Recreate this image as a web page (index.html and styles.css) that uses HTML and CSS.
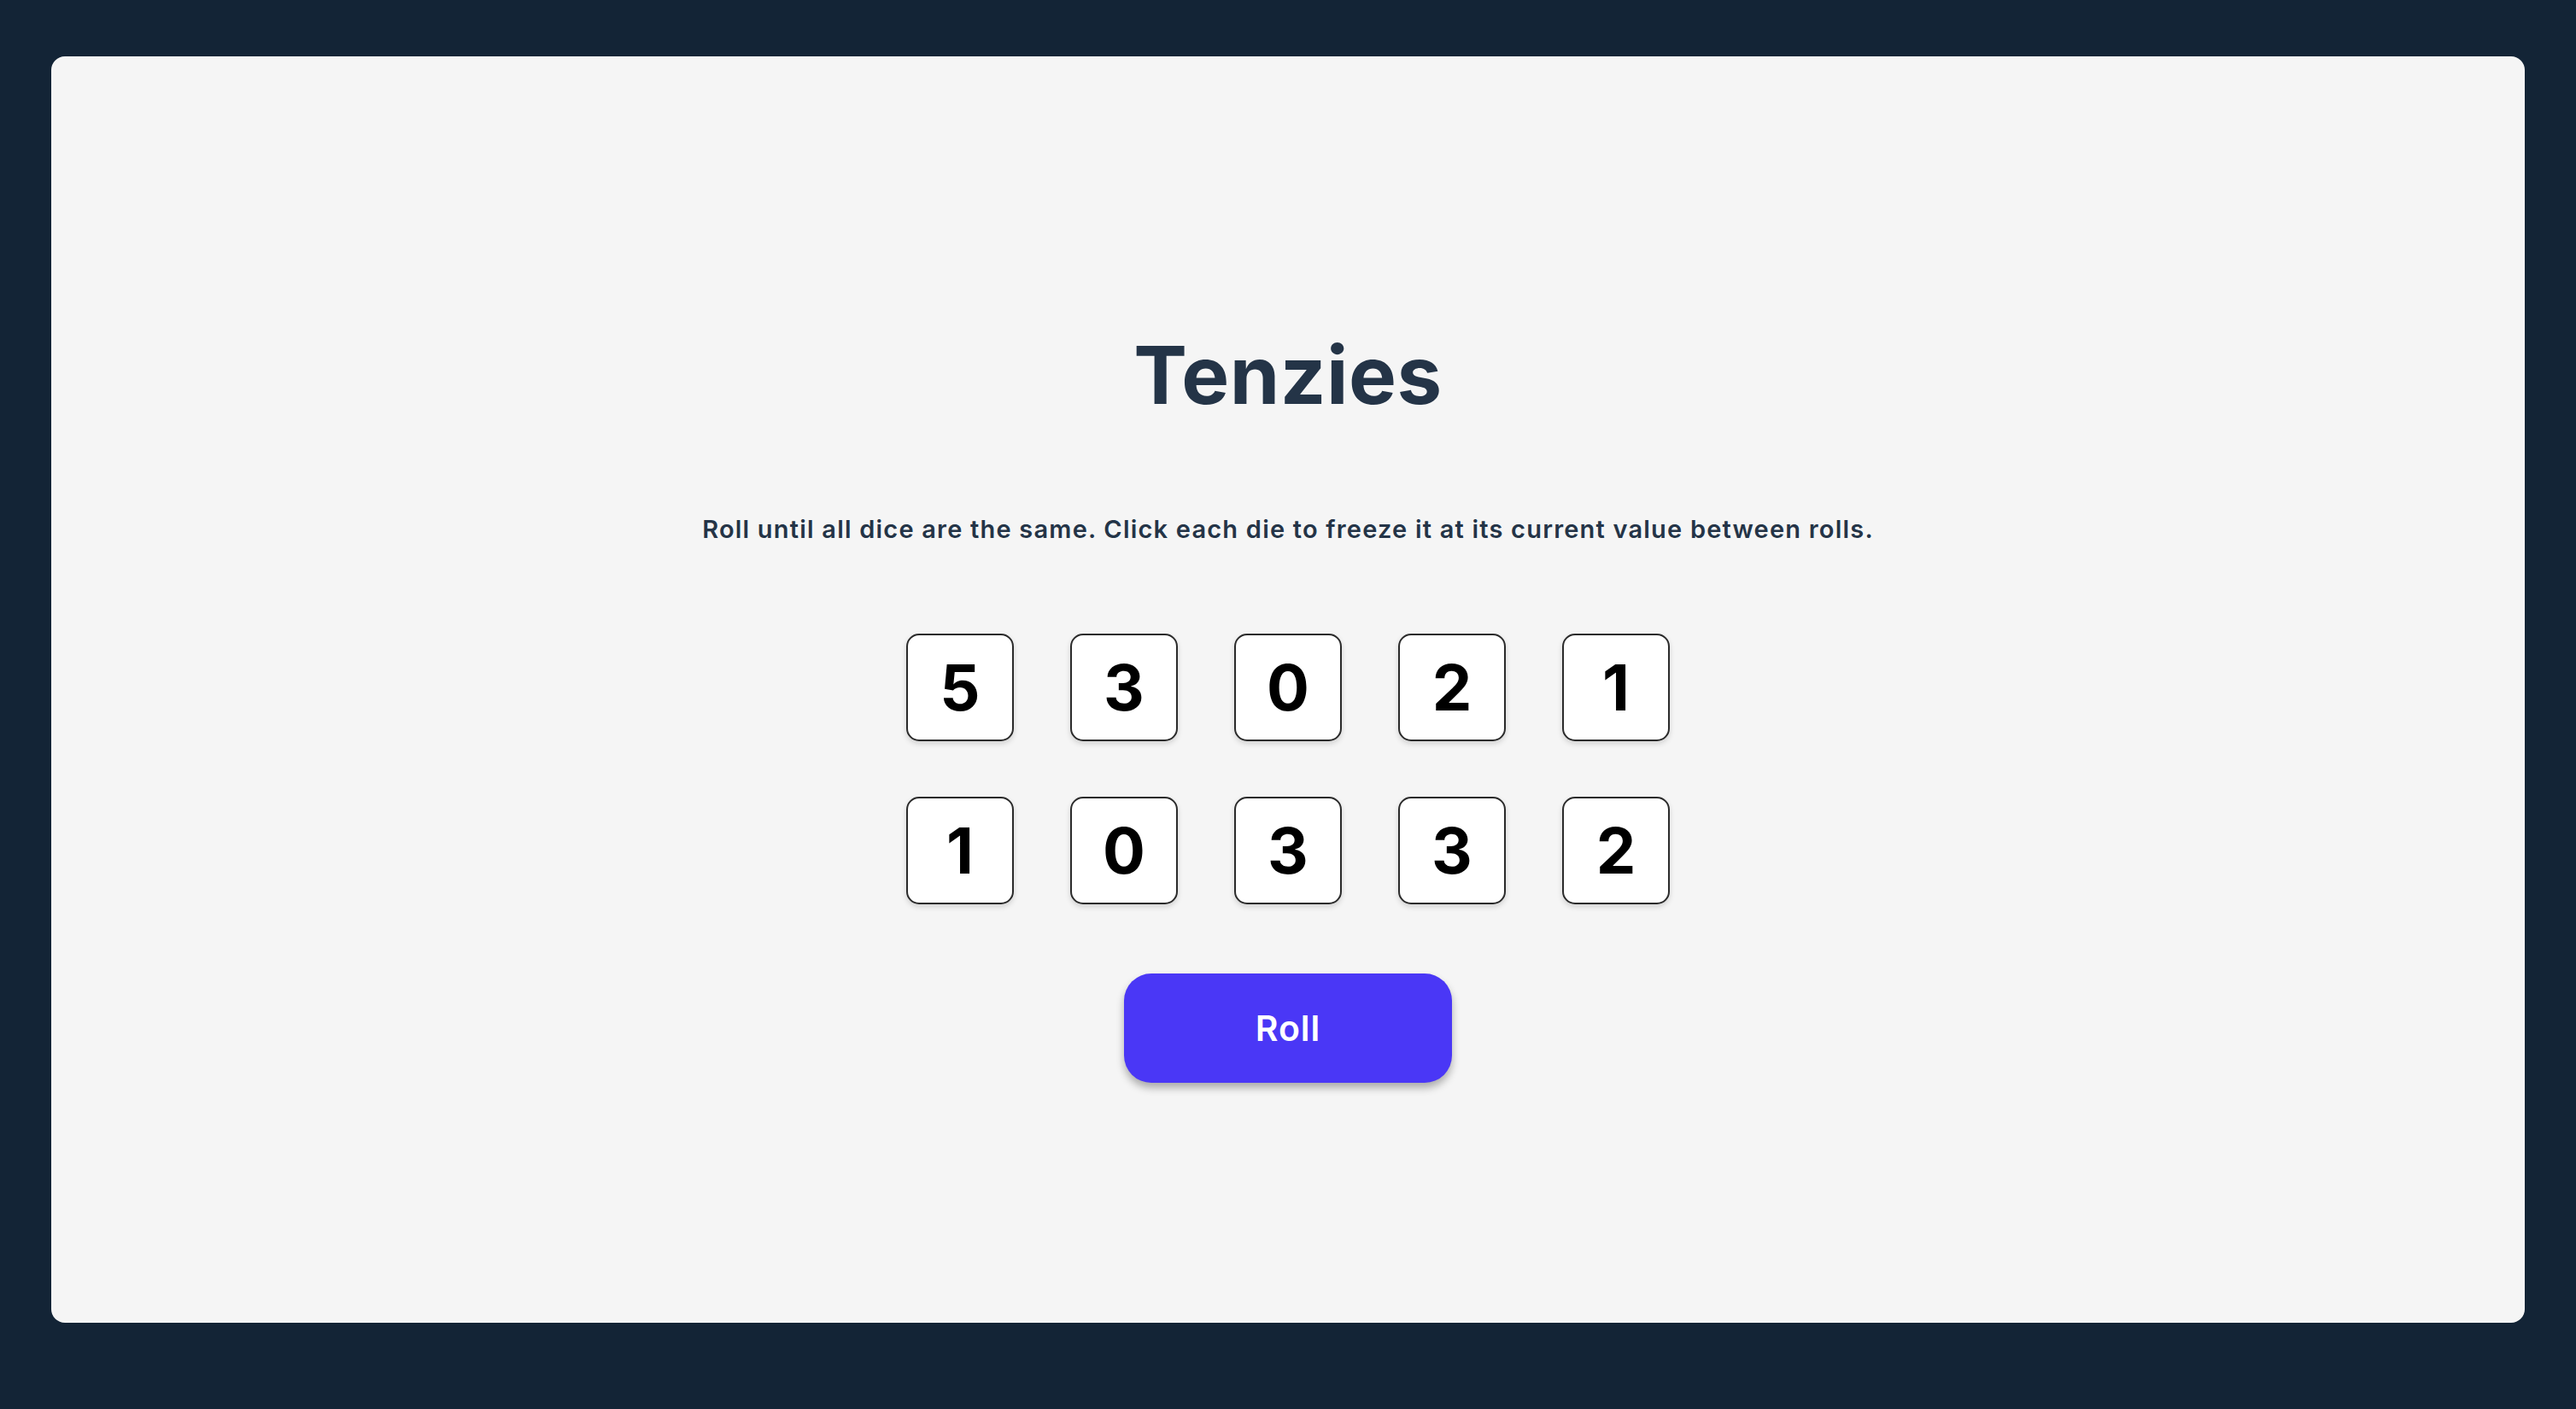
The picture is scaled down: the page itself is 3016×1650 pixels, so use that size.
FILE: index.html
```html
<!DOCTYPE html>
<html lang="en">
<head>
<meta charset="utf-8">
<title>Tenzies</title>
<link rel="stylesheet" href="styles.css">
</head>
<body>
<main class="board">
  <h1 class="title">Tenzies</h1>
  <p class="instructions">Roll until all dice are the same. Click each die to freeze it at its current value between rolls.</p>
  <div class="dice">
    <button class="die">5</button>
    <button class="die">3</button>
    <button class="die">0</button>
    <button class="die">2</button>
    <button class="die">1</button>
    <button class="die">1</button>
    <button class="die">0</button>
    <button class="die">3</button>
    <button class="die">3</button>
    <button class="die">2</button>
  </div>
  <button class="roll">Roll</button>
</main>
</body>
</html>
```
FILE: styles.css
```css
* { box-sizing: border-box; }
html, body { margin: 0; padding: 0; }
body {
  background: #132436;
  padding: 66px 60px 101px;
  height: 1650px;
  font-family: Inter, "Noto Sans", sans-serif;
}
.board {
  background: #f5f5f5;
  border-radius: 16px;
  height: 1483px;
  display: flex;
  flex-direction: column;
  align-items: center;
  padding-top: 326px;
}
.title {
  margin: 0;
  font-family: Inter, sans-serif;
  font-weight: 700;
  font-size: 94px;
  line-height: 1;
  color: #243447;
  letter-spacing: 0.5px;
}
.instructions {
  margin: 119px 0 0;
  font-family: Inter, sans-serif;
  font-weight: 600;
  font-size: 29px;
  line-height: 1;
  color: #243447;
  letter-spacing: 1.2px;
}
.dice {
  margin-top: 108px;
  display: grid;
  grid-template-columns: repeat(5, 126px);
  grid-auto-rows: 126px;
  column-gap: 66px;
  row-gap: 65px;
}
.die {
  background: #fff;
  border: 2px solid #2b2b2b;
  border-radius: 15px;
  box-shadow: 0 3px 6px rgba(0,0,0,0.15);
  font-family: Inter, sans-serif;
  font-weight: 700;
  font-size: 74px;
  color: #000;
  padding: 0;
  display: flex;
  align-items: center;
  justify-content: center;
  line-height: 1;
}
.roll {
  margin-top: 81px;
  width: 384px;
  height: 128px;
  border: none;
  border-radius: 32px;
  background: #4a37f6;
  color: #fff;
  font-family: Inter, sans-serif;
  font-weight: 600;
  font-size: 41px;
  letter-spacing: 1px;
  box-shadow: 0 6px 10px rgba(0,0,0,0.3);
}
```
